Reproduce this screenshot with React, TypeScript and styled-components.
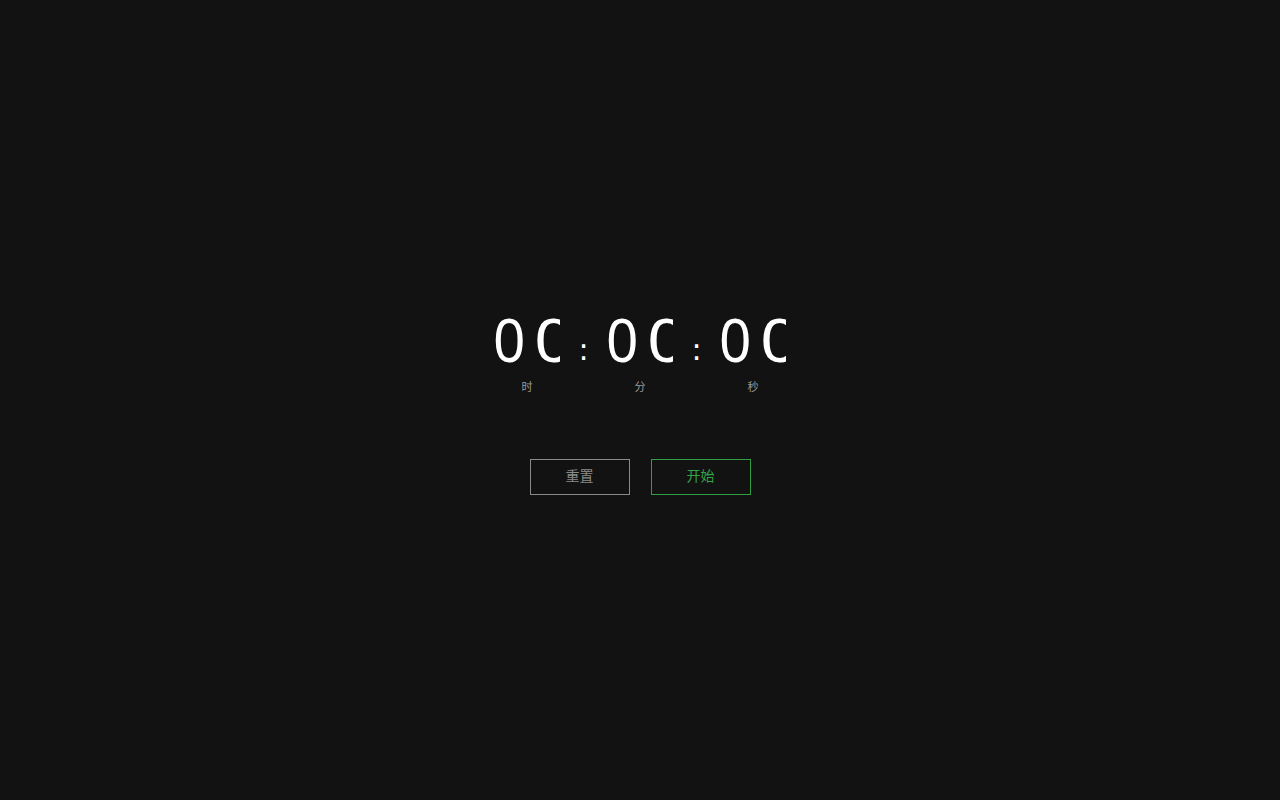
import { Fragment } from 'react'
import styled, { createGlobalStyle } from 'styled-components'

const Global = createGlobalStyle`
  html, body { margin: 0; padding: 0; background: #121212; }
  body {
    font-family: "Noto Sans", "Noto Sans CJK SC", sans-serif;
    color: #fff;
  }
`

/* ---------------- UI ---------------- */

const Page = styled.main`
  min-height: 100vh; box-sizing: border-box; padding-top: 3px;
  display: flex; flex-direction: column;
  align-items: center; justify-content: center;
`
const Clock = styled.div`
  display: flex; align-items: flex-start;
`
const Unit = styled.div`
  width: 70px;
  display: flex; flex-direction: column; align-items: center;
`
const Digits = styled.div`
  display: flex; height: 61px; align-self: flex-start;
  margin-left: 1px;
  font-family: "Noto Sans", "Open Sans", sans-serif;
  font-size: 61px; line-height: 1; color: #fff;
`
// first digit drawn a bit narrow, the second one sits in a clipping box
const Digit = styled.span`
  display: inline-block; width: 41.3px; flex: none;
  transform: scaleX(0.93); transform-origin: left center;
`
const DigitClip = styled.span`
  display: inline-block; width: 26px; flex: none; overflow: hidden;
  span {
    display: inline-block;
    transform: scaleX(1.14); transform-origin: left center;
  }
`
const Label = styled.div`
  margin-top: 10px;
  font-size: 11px; line-height: 15px; color: #9a9a9a;
  font-family: "Noto Sans CJK SC", sans-serif;
`
const Colon = styled.div`
  width: 43px; height: 61px; box-sizing: border-box;
  display: flex; justify-content: center; align-items: flex-start;
  padding-top: 27px;
  font-family: "DejaVu Sans", sans-serif;
  font-size: 30px; line-height: 1; color: #fff;
`
const Buttons = styled.div`
  display: flex; gap: 21px; margin-top: 65px;
`
const Button = styled.button<{ tone: 'gray' | 'green' }>`
  width: 100px; height: 36px; box-sizing: border-box;
  background: transparent;
  border: 1px solid ${({ tone }) => tone === 'green' ? '#2f9e44' : '#8a8a8a'};
  color: ${({ tone }) => tone === 'green' ? '#33a348' : '#8a8a8a'};
  font-family: "Noto Sans CJK SC", sans-serif;
  font-size: 14px; line-height: 1; cursor: pointer;
  padding: 0 0 4px;
`

const units = [
  { value: '00', label: '时' },
  { value: '00', label: '分' },
  { value: '00', label: '秒' },
]

export default function App() {
  return (
    <>
      <Global />
      <Page>
        <Clock>
          {units.map((u, i) => (
            <Fragment key={u.label}>
              {i > 0 && <Colon>:</Colon>}
              <Unit>
                <Digits>
                  <Digit>{u.value[0]}</Digit>
                  <DigitClip><span>{u.value[1]}</span></DigitClip>
                </Digits>
                <Label>{u.label}</Label>
              </Unit>
            </Fragment>
          ))}
        </Clock>
        <Buttons>
          <Button tone="gray">重置</Button>
          <Button tone="green">开始</Button>
        </Buttons>
      </Page>
    </>
  )
}
